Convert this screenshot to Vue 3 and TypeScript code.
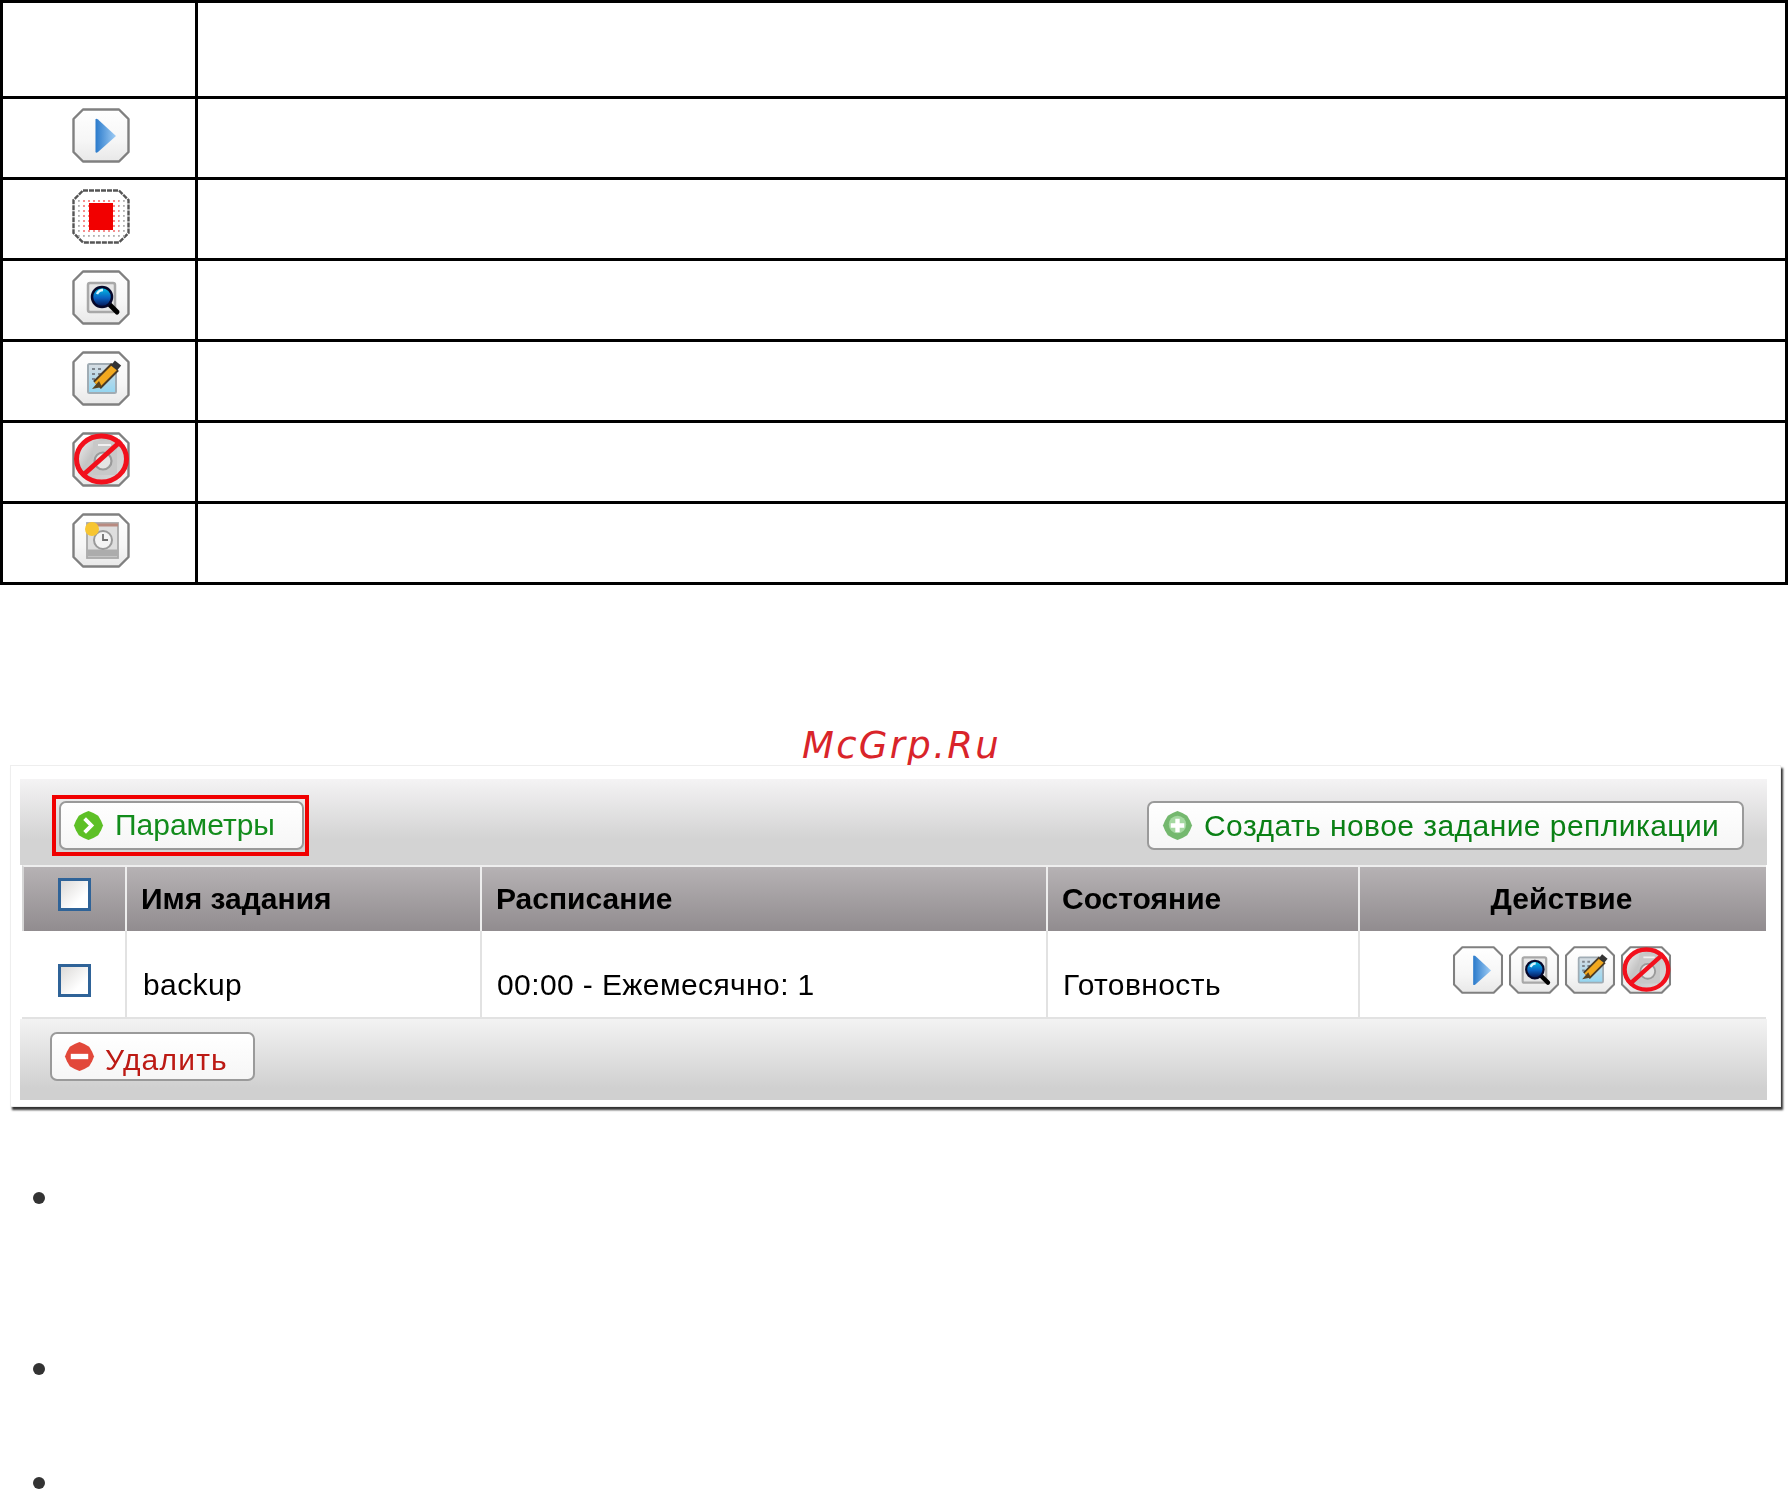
<script setup lang="ts">
interface LegendRow { icon: string | null; label: string }

const legend: LegendRow[] = [
  { icon: null, label: 'header' },
  { icon: 'play', label: 'start' },
  { icon: 'stop', label: 'stop' },
  { icon: 'search', label: 'view' },
  { icon: 'edit', label: 'edit' },
  { icon: 'ban', label: 'disable' },
  { icon: 'sched', label: 'schedule' },
]

const columns = ['Имя задания', 'Расписание', 'Состояние', 'Действие']
const job = { name: 'backup', schedule: '00:00 - Ежемесячно: 1', state: 'Готовность' }
const actions = ['play', 'search', 'edit', 'ban']
const bullets = [1, 2, 3]
</script>

<template>
  <div class="page">
    <svg class="sprite" aria-hidden="true">
      <defs>
        <linearGradient id="g-face" x1="0" y1="0" x2="0" y2="1">
          <stop offset="0" stop-color="#ffffff" />
          <stop offset="0.6" stop-color="#f6f6f6" />
          <stop offset="1" stop-color="#e8e8e8" />
        </linearGradient>
        <linearGradient id="g-play" x1="0" y1="0" x2="1" y2="0">
          <stop offset="0" stop-color="#2a7acb" />
          <stop offset="1" stop-color="#a0cdf5" />
        </linearGradient>
        <linearGradient id="g-lens" x1="0" y1="0" x2="0" y2="1">
          <stop offset="0" stop-color="#00c8e8" />
          <stop offset="0.55" stop-color="#0a60c0" />
          <stop offset="1" stop-color="#04104c" />
        </linearGradient>
        <linearGradient id="g-note" x1="0" y1="0" x2="0" y2="1">
          <stop offset="0" stop-color="#d8dde2" />
          <stop offset="1" stop-color="#92d6f2" />
        </linearGradient>
        <linearGradient id="g-ban" x1="0" y1="0" x2="1" y2="0.6">
          <stop offset="0" stop-color="#f4f4f4" />
          <stop offset="0.4" stop-color="#c4c4c4" />
          <stop offset="1" stop-color="#d6d6d6" />
        </linearGradient>
        <pattern id="p-dots" width="5" height="5" patternUnits="userSpaceOnUse">
          <rect x="1" y="1" width="1.8" height="1.8" fill="#b0b0b0" />
        </pattern>
        <pattern id="p-pink" width="5" height="5" patternUnits="userSpaceOnUse">
          <rect x="1" y="1" width="2" height="2" fill="#f78c8c" />
        </pattern>
      </defs>
      <symbol id="i-base" viewBox="0 0 58 55">
        <path d="M11 1.5H47L56.5 11V44L47 53.5H11L1.5 44V11Z" fill="url(#g-face)" stroke="#808080" stroke-width="2.4" stroke-linejoin="round" />
      </symbol>
      <symbol id="i-play" viewBox="0 0 58 55">
        <use href="#i-base" />
        <path d="M23.500 11.500Q24 10 26 11.500L44 28L26 44Q24 45.500 23.500 44Z" fill="url(#g-play)" />
      </symbol>
      <symbol id="i-stop" viewBox="0 0 58 55">
        <path d="M11 1.5H47L56.500 11V44L47 53.500H11L1.500 44V11Z" fill="#fff" stroke="#555" stroke-width="2.400" stroke-dasharray="5 1" />
        <path d="M5 8H53V48H5Z" fill="url(#p-dots)" />
        <rect x="11" y="9" width="36" height="37" fill="url(#p-pink)" />
        <rect x="17" y="14" width="24" height="27" fill="#f20000" />
      </symbol>
      <symbol id="i-search" viewBox="0 0 58 55">
        <use href="#i-base" />
        <rect x="16" y="13" width="27" height="29" rx="2" fill="#e6e6e6" stroke="#a8a8a8" stroke-width="2.500" />
        <path d="M37 34L45 42" stroke="#000" stroke-width="5" stroke-linecap="round" />
        <circle cx="30" cy="27" r="10" fill="url(#g-lens)" stroke="#06082a" stroke-width="2.500" />
        <path d="M25 24Q27 20 31 20" stroke="#d8f6ff" stroke-width="2.500" fill="none" />
      </symbol>
      <symbol id="i-edit" viewBox="0 0 58 55">
        <use href="#i-base" />
        <rect x="16" y="13" width="28" height="29" rx="1.500" fill="url(#g-note)" stroke="#a0acb4" stroke-width="2" />
        <path d="M20 18h3M26 18h3M20 23h3M26 23h3M20 28h3" stroke="#7d858d" stroke-width="2.200" />
        <path d="M25 34L43 16" stroke="#4a3a26" stroke-width="11" />
        <path d="M25 34L43 16" stroke="#f2a91f" stroke-width="7" />
        <path d="M27 30L20 38L30 36Z" fill="#5a4420" />
        <path d="M42 17L46 12" stroke="#333" stroke-width="8" />
      </symbol>
      <symbol id="i-ban" viewBox="0 0 58 55">
        <use href="#i-base" />
        <ellipse cx="29.500" cy="27" rx="24" ry="22" fill="url(#g-ban)" />
        <rect x="21" y="9" width="24" height="34" rx="2" fill="#c8c8c8" />
        <path d="M26 13h13" stroke="#f0f0f0" stroke-width="2" />
        <circle cx="31" cy="29" r="8.500" fill="#e4e4e4" stroke="#9a9a9a" stroke-width="2.200" />
        <ellipse cx="29.500" cy="27" rx="25" ry="23" fill="none" stroke="#f2101c" stroke-width="5" />
        <path d="M10 44L49 9" stroke="#f2101c" stroke-width="5" />
      </symbol>
      <symbol id="i-sched" viewBox="0 0 58 55">
        <use href="#i-base" />
        <rect x="15" y="10" width="31" height="35" fill="#dedede" stroke="#a8a8a8" stroke-width="1.800" />
        <path d="M16 12H46" stroke="#b88a80" stroke-width="3" />
        <path d="M16 40H46" stroke="#acacac" stroke-width="7" />
        <circle cx="31" cy="27" r="9" fill="#f4f4f4" stroke="#9a9a9a" stroke-width="2" />
        <path d="M31 21V27H36" stroke="#707070" stroke-width="1.800" fill="none" />
        <circle cx="20" cy="16" r="7" fill="#f7c531" />
      </symbol>
    </svg>

    <table class="legend">
      <tbody>
        <tr v-for="row in legend" :key="row.label">
          <td class="legend-icon">
            <svg v-if="row.icon" class="ibtn"><use :href="`#i-${row.icon}`" /></svg>
          </td>
          <td></td>
        </tr>
      </tbody>
    </table>

    <div class="watermark">McGrp.Ru</div>

    <section class="panel">
      <div class="panel-inner">
        <div class="toolbar">
          <div class="highlight">
            <button class="btn btn-params" type="button">
              <svg class="glyph" viewBox="0 0 32 32">
                <path d="M16 1l5 2 5 3 3 5 2 5-2 5-3 5-5 3-5 2-5-2-5-3-3-5-2-5 2-5 3-5 5-3z" fill="#5dc026" />
                <path d="M12 9l7 7-7 7" fill="none" stroke="#fff" stroke-width="4" />
              </svg>
              <span>Параметры</span>
            </button>
          </div>
          <button class="btn btn-create" type="button">
            <svg class="glyph" viewBox="0 0 32 32">
              <path d="M16 1l5 2 5 3 3 5 2 5-2 5-3 5-5 3-5 2-5-2-5-3-3-5-2-5 2-5 3-5 5-3z" fill="#74b86e" />
              <circle cx="16" cy="15" r="9" fill="#a4d8a0" />
              <path d="M16 9v14M9 16h14" stroke="#fff" stroke-width="4.500" />
            </svg>
            <span>Создать новое задание репликации</span>
          </button>
        </div>

        <table class="jobs">
          <colgroup>
            <col class="c-check" />
            <col class="c-name" />
            <col class="c-sched" />
            <col class="c-state" />
            <col class="c-action" />
          </colgroup>
          <thead>
            <tr>
              <th class="cell-check"><input class="check" type="checkbox" /></th>
              <th v-for="col in columns" :key="col" :class="{ 'th-center': col === 'Действие' }">{{ col }}</th>
            </tr>
          </thead>
          <tbody>
            <tr>
              <td class="cell-check"><input class="check" type="checkbox" /></td>
              <td class="cell-name">{{ job.name }}</td>
              <td>{{ job.schedule }}</td>
              <td>{{ job.state }}</td>
              <td class="cell-actions">
                <div class="action-row">
                  <svg v-for="a in actions" :key="a" class="ibtn-sm"><use :href="`#i-${a}`" /></svg>
                </div>
              </td>
            </tr>
          </tbody>
        </table>

        <div class="footer">
          <button class="btn btn-delete" type="button">
            <svg class="glyph" viewBox="0 0 32 32">
              <path d="M16 1l5 2 5 3 3 5 2 5-2 5-3 5-5 3-5 2-5-2-5-3-3-5-2-5 2-5 3-5 5-3z" fill="#e2483a" />
              <path d="M7 16h18" stroke="#fff" stroke-width="5.500" />
            </svg>
            <span>Удалить</span>
          </button>
        </div>
      </div>
    </section>

    <ul class="bullets">
      <li v-for="b in bullets" :key="b"></li>
    </ul>
  </div>
</template>

<style>
html,
body {
  margin: 0;
  background: #fff;
}
</style>

<style scoped>
.page {
  width: 1790px;
  height: 1489px;
  overflow: hidden;
  font-family: "Liberation Sans", Arial, sans-serif;
}
.sprite {
  position: absolute;
  width: 0;
  height: 0;
}

/* legend table */
.legend {
  width: 1788px;
  table-layout: fixed;
  border-collapse: separate;
  border-spacing: 0;
  border: 3px solid #000;
  border-bottom: 0;
}
.legend td {
  height: 81px;
  box-sizing: border-box;
  padding: 0;
  border-bottom: 3px solid #000;
  vertical-align: top;
}
.legend tr:first-child td {
  height: 96px;
}
.legend-icon {
  width: 195px;
  border-right: 3px solid #000;
  padding: 9px 0 0 69px !important;
}
.ibtn {
  display: block;
  width: 58px;
  height: 55px;
  filter: blur(0.7px);
}

.watermark {
  height: 180px;
  box-sizing: border-box;
  padding: 138px 0 0 802px;
  color: #d9242a;
  font-family: "DejaVu Sans", sans-serif;
  font-style: italic;
  font-size: 37px;
  line-height: 46px;
  letter-spacing: 2.3px;
}

/* panel */
.panel {
  width: 1771px;
  height: 342px;
  margin-left: 10px;
  box-sizing: border-box;
  padding: 13px 13px 8px 9px;
  background: #fff;
  border: 1px solid #eee;
  box-shadow: 2px 3px 2px #333;
  filter: blur(0.6px);
}
.panel-inner {
  height: 321px;
  display: flex;
  flex-direction: column;
}
.toolbar {
  display: flex;
  justify-content: space-between;
  align-items: center;
  height: 86px;
  box-sizing: border-box;
  padding: 16px 23px 10px 32px;
  background: linear-gradient(#f4f3f4, #d3d3d3 70%);
}
.highlight {
  border: 4px solid #f00000;
  padding: 2px 1px 2px 3px;
  display: flex;
}
.btn {
  display: flex;
  align-items: center;
  height: 49px;
  box-sizing: border-box;
  border: 2px solid #9a9a9a;
  border-radius: 7px;
  background: linear-gradient(#fff, #f6f6f6);
  font: 30px "Liberation Sans", Arial, sans-serif;
  padding: 0;
}
.glyph {
  width: 31px;
  height: 31px;
  flex: none;
}
.btn-params {
  width: 245px;
  padding-left: 12px;
  color: #128c1c;
  gap: 11px;
}
.btn-create {
  width: 597px;
  padding-left: 13px;
  color: #0a8015;
  gap: 11px;
  letter-spacing: 0.45px;
}
.btn-create span {
  padding-top: 2px;
}
.btn-delete {
  width: 205px;
  padding-left: 12px;
  color: #bc1a14;
  gap: 10px;
  letter-spacing: 1.2px;
}
.btn-delete span {
  padding-top: 7px;
}

/* jobs */
.jobs {
  width: 1744px;
  margin-left: 2px;
  table-layout: fixed;
  border-collapse: separate;
  border-spacing: 0;
  background: #fff;
}
.c-check { width: 105px; }
.c-name { width: 355px; }
.c-sched { width: 566px; }
.c-state { width: 312px; }
.c-action { width: 406px; }
.jobs th {
  height: 66px;
  box-sizing: border-box;
  padding: 0 0 0 14px;
  text-align: left;
  font-size: 30px;
  font-weight: bold;
  color: #000;
  background: linear-gradient(#b6b2b4, #918c8f);
  border-top: 2px solid #eee;
  border-right: 2px solid #eee;
}
.jobs th:last-child,
.jobs td:last-child {
  border-right: 0;
}
.jobs th.th-center {
  text-align: center;
  padding: 0 3px 0 0;
}
.jobs th.cell-check {
  border-left: 2px solid #d6d6d6;
}
.jobs td {
  height: 88px;
  box-sizing: border-box;
  padding: 22px 0 0 15px;
  font-size: 30px;
  letter-spacing: 0.4px;
  color: #000;
  border-right: 2px solid #e2e2e2;
  border-bottom: 2px solid #e2e2e2;
}
.jobs td.cell-name {
  padding-left: 16px;
}
.jobs .cell-check {
  padding: 0 0 0 36px;
  vertical-align: top;
}
.jobs th.cell-check {
  padding: 11px 0 0 34px;
}
.jobs td.cell-check {
  padding-top: 33px;
}
.check {
  appearance: none;
  display: block;
  width: 33px;
  height: 33px;
  box-sizing: border-box;
  margin: 0;
  border: 3px solid #2f6398;
  background: linear-gradient(135deg, #dcdad8, #fff 70%);
}
.jobs td.cell-actions {
  padding: 15px 0 0;
  vertical-align: top;
}
.action-row {
  display: flex;
  justify-content: center;
  gap: 4px;
  padding-right: 2px;
}
.ibtn-sm {
  width: 52px;
  height: 48px;
  flex: none;
}
.footer {
  flex: 1;
  box-sizing: border-box;
  padding: 13px 0 0 30px;
  background: linear-gradient(#f3f3f3, #d0d0d0 85%);
}

/* bullets */
.bullets {
  list-style: none;
  margin: 0;
  padding: 85px 0 0 33px;
  display: flex;
  flex-direction: column;
}
.bullets li {
  width: 12px;
  height: 12px;
  border-radius: 50%;
  background: #333;
}
.bullets li + li {
  margin-top: 159px;
}
.bullets li:last-child {
  margin-top: 102px;
}
</style>
